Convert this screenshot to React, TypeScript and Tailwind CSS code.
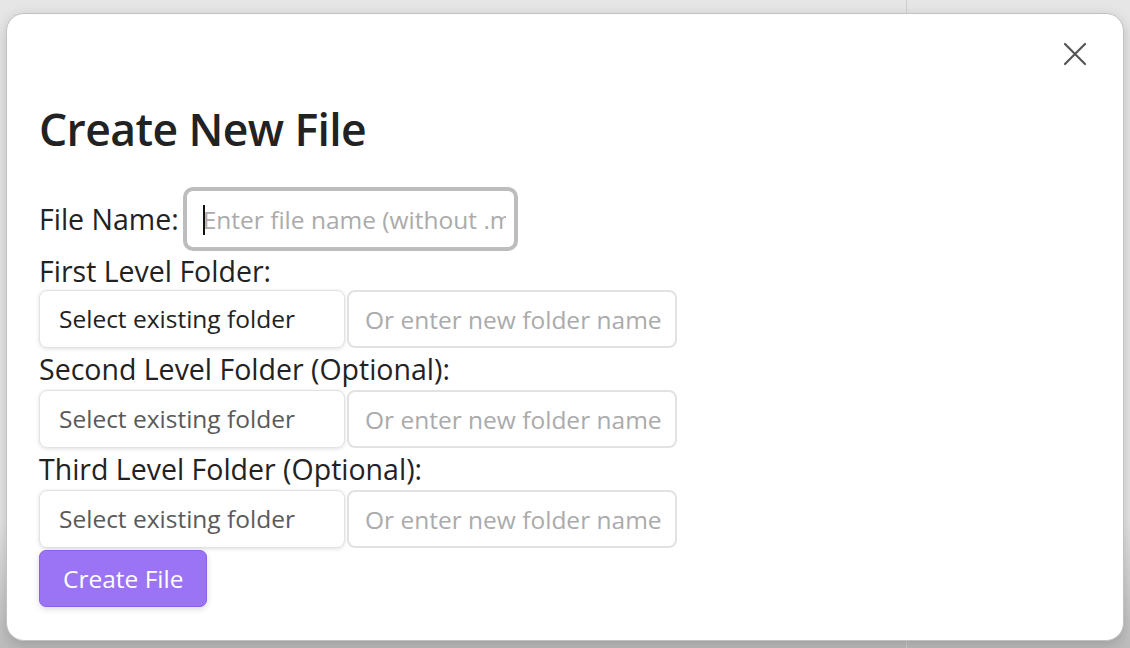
export default function App() {
  const font = { fontFamily: '"Open Sans", "Noto Sans", Arial, sans-serif' };
  return (
    <div className="relative w-[1130px] h-[648px] overflow-hidden bg-gradient-to-b from-[#e6e6e6] from-80% to-[#bcbcbc]" style={font}>
      {/* backdrop panes */}
      <div className="flex h-full">
        <div className="w-[907px] h-full border-r border-[#cfcfcf]" />
        <div className="flex-1 h-full" />
      </div>

      {/* modal */}
      <div className="absolute left-[6px] top-[13px] w-[1118px] h-[628px] rounded-[18px] bg-white border border-[#c2c2c2] shadow-[0_4px_14px_rgba(0,0,0,0.18)] pl-8 pt-[88px] text-[#222]">
        <button className="absolute right-[36px] top-[28px] w-[24px] h-[24px] flex items-center justify-center">
          <svg width="24" height="24" viewBox="0 0 24 24" fill="none" stroke="#555" strokeWidth="2.2" strokeLinecap="round">
            <path d="M2 2 L22 22 M22 2 L2 22" />
          </svg>
        </button>

        <h2 className="text-[44.5px] leading-[1.2] font-semibold tracking-[-0.6px]">Create New File</h2>

        <div className="mt-8 flex items-center h-[64px]">
          <span className="text-[28.5px] leading-[42px]">File Name:</span>
          <div className="relative ml-[4px]">
            <input
              className="w-[335px] h-[64px] rounded-[10px] border-4 border-[#bdbdbd] pl-[16px] pr-2 text-[24.5px] text-[#222] placeholder:text-[#ababab] outline-none"
              placeholder="Enter file name (without .md extension)"
            />
            <span className="absolute left-[20px] top-[18px] w-[2px] h-[30px] bg-[#111]" />
          </div>
        </div>

        <div className="h-[39px] flex items-center text-[28.5px]">First Level Folder:</div>
        <FolderRow first />
        <div className="h-[42px] flex items-center text-[28.5px]">Second Level Folder (Optional):</div>
        <FolderRow />
        <div className="h-[42px] flex items-center text-[28.5px]">Third Level Folder (Optional):</div>
        <FolderRow />

        <button className="mt-[2px] h-[57px] px-[23px] rounded-[7px] bg-[#9b74f5] border border-[#8a62ee] text-white text-[24.5px] shadow-[0_2px_6px_rgba(0,0,0,0.15)]">
          Create File
        </button>
      </div>
    </div>
  );
}

function FolderRow({ first = false }: { first?: boolean }) {
  return (
    <div className="flex gap-[2px] h-[58px]">
      <select
        className={
          "appearance-none w-[306px] h-full rounded-[8px] border border-[#e2e2e2] bg-white pl-[19px] text-[24.5px] shadow-[0_1px_4px_rgba(0,0,0,0.12)] outline-none " +
          (first ? "text-[#222]" : "text-[#5a5a5a]")
        }
        defaultValue=""
      >
        <option value="">Select existing folder</option>
      </select>
      <input
        className="w-[330px] h-full rounded-[8px] border-2 border-[#e2e2e2] bg-white pl-[16px] text-[24.5px] placeholder:text-[#ababab] outline-none"
        placeholder="Or enter new folder name"
      />
    </div>
  );
}
